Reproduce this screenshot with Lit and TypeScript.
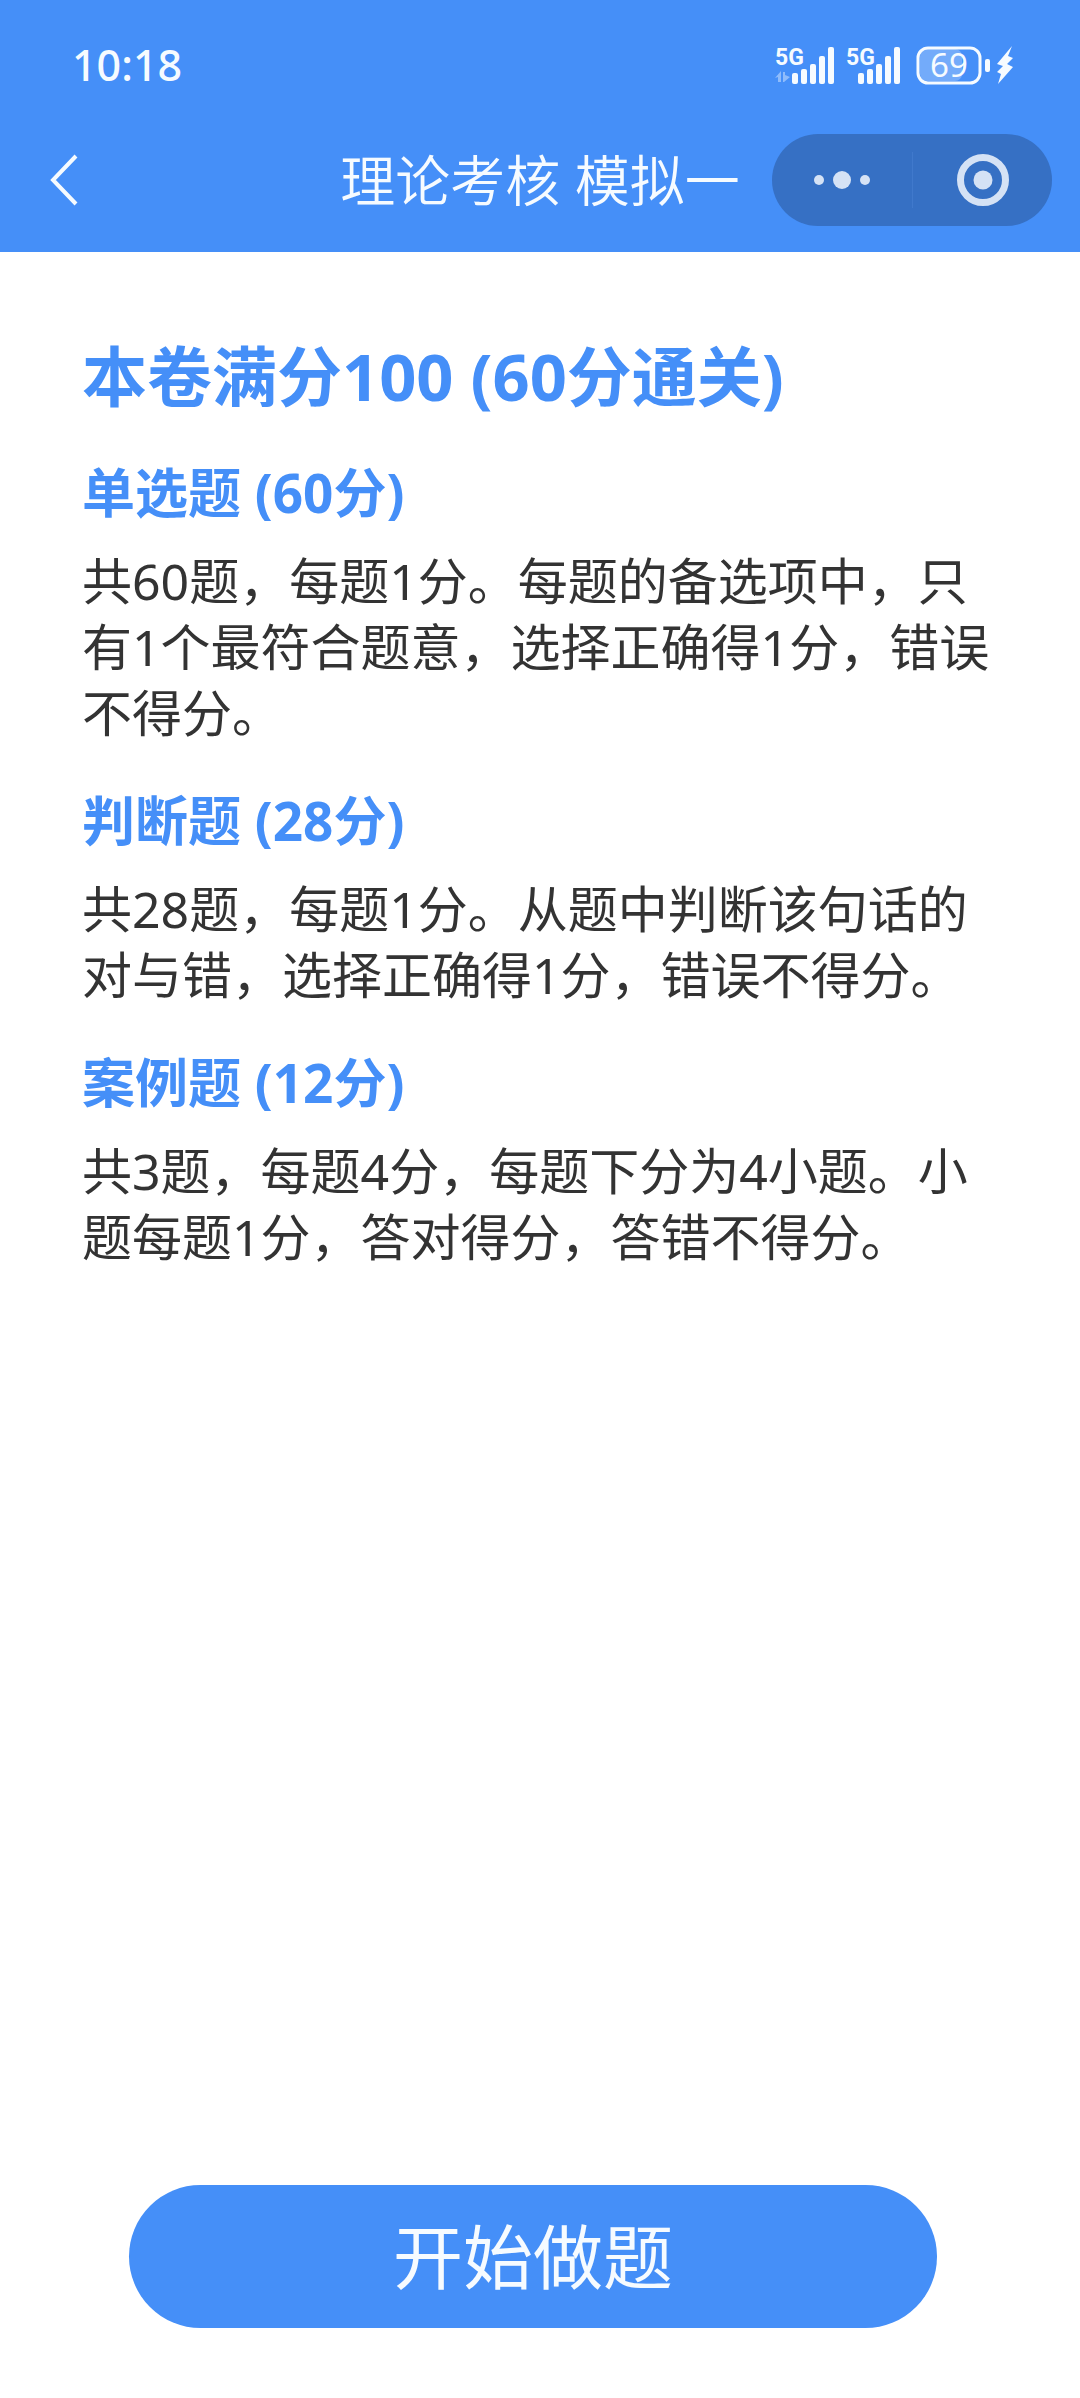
import { LitElement, html, svg, css } from "lit";
import { customElement, property } from "lit/decorators.js";

interface Section {
  title: string;
  text: string;
}

const SECTIONS: Section[] = [
  {
    title: "单选题 (60分)",
    text: "共60题，每题1分。每题的备选项中，只有1个最符合题意，选择正确得1分，错误不得分。",
  },
  {
    title: "判断题 (28分)",
    text: "共28题，每题1分。从题中判断该句话的对与错，选择正确得1分，错误不得分。",
  },
  {
    title: "案例题 (12分)",
    text: "共3题，每题4分，每题下分为4小题。小题每题1分，答对得分，答错不得分。",
  },
];

/* Bar heights of a full-strength mobile signal, shortest first. */
const BARS = [11, 15, 20, 28, 37];

@customElement("status-bar")
export class StatusBar extends LitElement {
  @property() time = "";
  @property({ type: Number }) battery = 0;

  static styles = css`
    :host {
      display: flex;
      align-items: center;
      justify-content: space-between;
      height: 130px;
      padding: 0 68px 0 72px;
      box-sizing: border-box;
      color: #f6fbff;
    }
    .time {
      font-size: 43px;
      font-weight: 500;
      line-height: 50px;
    }
    .icons {
      display: flex;
      align-items: center;
      gap: 12px;
    }
    .tag {
      font: bold 23px "Roboto", sans-serif;
      fill: currentColor;
    }
    .level {
      font: 33px "Noto Sans", sans-serif;
      fill: currentColor;
      text-anchor: middle;
    }
    svg {
      display: block;
      overflow: visible;
    }
  `;

  private signal(start: number, arrows: boolean) {
    const width = start + 42;
    return html`<svg width=${width} height="40" viewBox="0 0 ${width} 40" aria-hidden="true">
      <text class="tag" x="0" y="20">5G</text>
      ${arrows
        ? svg`<path d="M0 33 L6 26 V37 H3 V32 Z M8 27 H10 V30 L15 32 L9 37 H8 Z" fill="#fff" opacity="0.4"/>`
        : ""}
      ${BARS.map(
        (h, i) =>
          svg`<rect x=${start + i * 9} y=${39 - h} width="6" height=${h} rx="2" fill="currentColor"/>`
      )}
    </svg>`;
  }

  render() {
    return html`
      <span class="time">${this.time}</span>
      <div class="icons">
        ${this.signal(17, true)} ${this.signal(12, false)}
        <svg width="100" height="40" viewBox="-4 0 100 40" role="img" aria-label="电量 ${this.battery}%">
          <rect x="4" y="4" width="42" height="32" rx="7" fill="#fff" opacity="0.25" />
          <rect x="2" y="3" width="62" height="35" rx="10" fill="none" stroke="currentColor" stroke-width="3" />
          <text class="level" x="33" y="32">${this.battery}</text>
          <rect x="69" y="14" width="5" height="13" rx="2" fill="currentColor" />
          <path d="M96 1 L81 19 L87 21 L81 27 L85 29 L82 39 L97 22 L91 19 L97 13 L92 11 Z" fill="currentColor" />
        </svg>
      </div>
    `;
  }
}

@customElement("nav-bar")
export class NavBar extends LitElement {
  @property() heading = "";

  static styles = css`
    :host {
      display: grid;
      grid-template-columns: 1fr auto 1fr;
      align-items: center;
      height: 100px;
      margin-bottom: 22px;
      padding: 0 28px;
      box-sizing: border-box;
    }
    button {
      display: flex;
      align-items: center;
      justify-content: center;
      height: 92px;
      padding: 0;
      border: 0;
      background: none;
      cursor: pointer;
    }
    .back {
      width: 72px;
    }
    h1 {
      margin: 0;
      color: #f6fbff;
      font-size: 55px;
      font-weight: 350;
      line-height: 80px;
      white-space: nowrap;
    }
    .side {
      display: flex;
      justify-content: flex-end;
      min-width: 0;
    }
    .capsule {
      display: flex;
      flex: none;
      align-items: center;
      width: 280px;
      border-radius: 46px;
      background: #3670c4;
    }
    .capsule button {
      flex: 1;
    }
    .divider {
      width: 1px;
      height: 56px;
      background: #4079cc;
    }
  `;

  render() {
    return html`
      <button class="back" aria-label="返回">
        <svg width="28" height="52" viewBox="0 0 28 52" fill="none" stroke="#f6fbff" stroke-width="4">
          <path d="M26 2 L3 26 L26 50" />
        </svg>
      </button>
      <h1>${this.heading}</h1>
      <div class="side">
        <div class="capsule">
          <button aria-label="更多">
            <svg width="56" height="20" viewBox="0 0 56 20" fill="#d5e2f5">
              <circle cx="5" cy="10" r="5" />
              <circle cx="28" cy="10" r="9" />
              <circle cx="51" cy="10" r="5" />
            </svg>
          </button>
          <span class="divider"></span>
          <button aria-label="关闭">
            <svg width="54" height="54" viewBox="0 0 54 54">
              <circle cx="28" cy="27" r="22.5" fill="none" stroke="#d5e2f5" stroke-width="7" />
              <circle cx="28" cy="27" r="9.5" fill="#d5e2f5" />
            </svg>
          </button>
        </div>
      </div>
    `;
  }
}

@customElement("app-root")
export class AppRoot extends LitElement {
  static styles = css`
    :host {
      display: flex;
      flex-direction: column;
      min-height: 100vh;
      background: #fff;
      color: #333;
      font-family: "Noto Sans", "Noto Sans CJK SC", sans-serif;
    }
    header {
      background: #458ff8;
    }
    main {
      display: flex;
      flex-direction: column;
      gap: 40px;
      padding: 82px 82px 40px;
    }
    h2,
    h3,
    p {
      margin: 0;
    }
    h2,
    h3 {
      color: #458ff8;
      font-weight: 700;
    }
    h2 {
      font-size: 65px;
      line-height: 84px;
    }
    h3 {
      margin-bottom: 20px;
      font-size: 53px;
      line-height: 70px;
    }
    p {
      font-size: 50px;
      line-height: 66px;
    }
    footer {
      display: flex;
      margin-top: auto;
      padding: 0 143px 70px 129px;
    }
    .start {
      flex: 1;
      height: 143px;
      border: 0;
      border-radius: 72px;
      background: #458ff8;
      color: #f6fbff;
      font-family: inherit;
      font-size: 70px;
      line-height: 100px;
      cursor: pointer;
    }
  `;

  render() {
    return html`
      <header>
        <status-bar time="10:18" battery="69"></status-bar>
        <nav-bar heading="理论考核 模拟一"></nav-bar>
      </header>
      <main>
        <h2>本卷满分100 (60分通关)</h2>
        ${SECTIONS.map(
          (s) => html`<section>
            <h3>${s.title}</h3>
            <p>${s.text}</p>
          </section>`
        )}
      </main>
      <footer>
        <button class="start">开始做题</button>
      </footer>
    `;
  }
}
